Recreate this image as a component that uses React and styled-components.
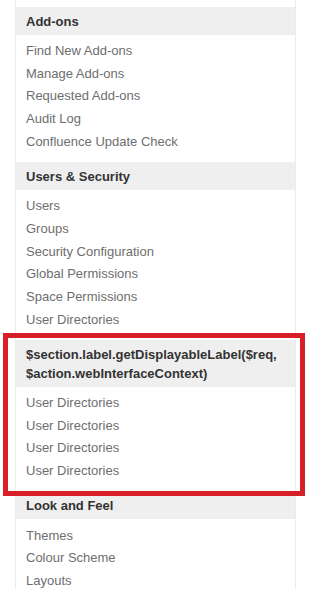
import styled, { createGlobalStyle } from "styled-components";

const GlobalStyle = createGlobalStyle`
    body {
        margin: 0;
        background: #fff;
        font-family: "Liberation Sans", Arial, sans-serif;
    }
`;

const sections = [
    {
        title: 'Add-ons',
        items: ['Find New Add-ons', 'Manage Add-ons', 'Requested Add-ons', 'Audit Log', 'Confluence Update Check'],
    },
    {
        title: 'Users & Security',
        items: ['Users', 'Groups', 'Security Configuration', 'Global Permissions', 'Space Permissions', 'User Directories'],
    },
    {
        title: '$section.label.getDisplayableLabel($req, $action.webInterfaceContext)',
        items: ['User Directories', 'User Directories', 'User Directories', 'User Directories'],
        highlight: true,
    },
    {
        title: 'Look and Feel',
        items: ['Themes', 'Colour Scheme', 'Layouts'],
    },
];

const App = () => {
    return (
        <>
            <GlobalStyle />
            <Sidebar>
                {sections.map((s, i) => (
                    <Section key={i}>
                        <SectionTitle>{s.title}</SectionTitle>
                        <ItemList>
                            {s.items.map((item, j) => (
                                <Item key={j}>{item}</Item>
                            ))}
                        </ItemList>
                        {s.highlight && <Highlight />}
                    </Section>
                ))}
            </Sidebar>
        </>
    );
}

export default App;

const Sidebar = styled.nav`
    width: 279px;
    margin-left: 15px;
    padding-top: 7px;
    border-left: 1px solid #ececec;
    border-right: 1px solid #ececec;
    background: #fff;
`;

const Section = styled.section`
    position: relative;
`;

const SectionTitle = styled.h3`
    margin: 0;
    padding: 4.5px 4px 4px 10px;
    background: #efefef;
    color: #333;
    font-size: 13px;
    font-weight: bold;
    line-height: 19px;
`;

const ItemList = styled.ul`
    list-style: none;
    margin: 0;
    padding: 5.4px 10px 8.8px;
`;

const Item = styled.li`
    color: #6e6e6e;
    font-size: 13px;
    line-height: 22.7px;
    white-space: nowrap;
`;

const Highlight = styled.div`
    position: absolute;
    top: -7px;
    bottom: -4px;
    left: -13px;
    right: -10px;
    border: 5px solid #d71f28;
    pointer-events: none;
    z-index: 1;
`;
